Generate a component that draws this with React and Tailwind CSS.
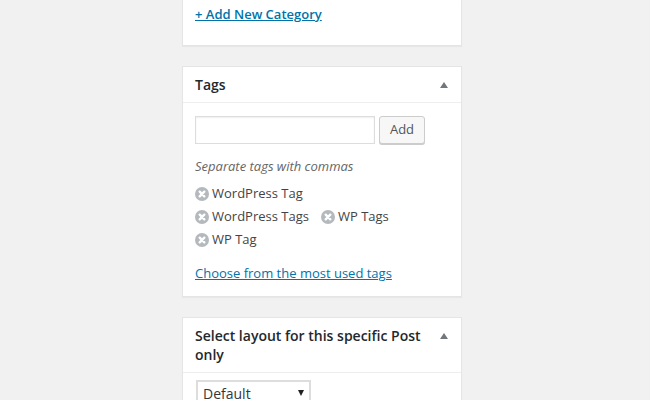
function Arrow() {
  return (
    <svg width="8" height="6" viewBox="0 0 8 6" className="block">
      <path d="M4 0 L8 6 L0 6 Z" fill="#72777c" />
    </svg>
  );
}

function X() {
  return (
    <svg width="14" height="14" viewBox="0 0 14 14" className="block shrink-0">
      <circle cx="7" cy="7" r="7" fill="#b4b9be" />
      <path d="M4.7 4.7 L9.3 9.3 M9.3 4.7 L4.7 9.3" stroke="#fff" strokeWidth="2.4" strokeLinecap="round" />
    </svg>
  );
}

function Tag({ children }) {
  return (
    <span className="flex items-center gap-[3px] mr-[12px] h-[23px] text-[13px] text-[#444]">
      <X />
      <span>{children}</span>
    </span>
  );
}

export default function App() {
  return (
    <div className="h-[400px] w-[650px] overflow-hidden bg-[#f1f1f1] pl-[182px] font-['Open_Sans',sans-serif]">
      <div className="w-[280px] flex flex-col gap-[20px]">
        <section className="h-[46px] bg-white border border-t-0 border-[#e5e5e5] shadow-[0_1px_1px_rgba(0,0,0,0.04)] px-3 pt-[5px]">
          <a className="block text-[13px] leading-[19px] font-semibold text-[#0073aa] underline">+ Add New Category</a>
        </section>

        <section className="h-[231px] bg-white border border-[#e5e5e5] shadow-[0_1px_1px_rgba(0,0,0,0.04)]">
          <header className="h-[36px] flex items-center justify-between pl-3 pr-[13px] border-b border-[#eee]">
            <h2 className="text-[14px] font-semibold text-[#23282d]">Tags</h2>
            <Arrow />
          </header>
          <div className="px-3 pt-[13px]">
            <div className="flex gap-[4px]">
              <input className="w-[180px] h-[28px] bg-white border border-[#ddd] shadow-[inset_0_1px_2px_rgba(0,0,0,0.07)]" />
              <button className="w-[46px] h-[28px] bg-[#f7f7f7] border border-[#ccc] rounded-[3px] shadow-[0_1px_0_#ccc] text-[13px] text-[#555]">Add</button>
            </div>
            <p className="mt-[13px] text-[13px] leading-[19px] italic text-[#666]">Separate tags with commas</p>
            <div className="mt-[6px] flex flex-wrap">
              <div className="w-full flex"><Tag>WordPress Tag</Tag></div>
              <Tag>WordPress Tags</Tag>
              <Tag>WP Tags</Tag>
              <div className="w-full flex"><Tag>WP Tag</Tag></div>
            </div>
            <a className="block mt-[13px] text-[13px] leading-[19px] text-[#0073aa] underline">Choose from the most used tags</a>
          </div>
        </section>

        <section className="bg-white border border-[#e5e5e5] shadow-[0_1px_1px_rgba(0,0,0,0.04)]">
          <header className="flex justify-between pl-3 pr-[13px] pt-[8px] pb-[8px] border-b border-[#eee]">
            <h2 className="w-[240px] text-[14px] leading-[19px] font-semibold text-[#23282d]">Select layout for this specific Post only</h2>
            <div className="pt-[7px]"><Arrow /></div>
          </header>
          <div className="px-[13px] pt-[7px] pb-3">
            <div className="w-[115px] h-[26px] flex items-center justify-between pb-[2px] pl-[5px] pr-[5px] border-2 border-b-0 border-[#ddd] bg-white text-[14px] text-[#32373c]">
              <span>Default</span>
              <svg width="6" height="6" viewBox="0 0 6 6" className="block"><path d="M0 0 H6 L3 6 Z" fill="#222" /></svg>
            </div>
          </div>
        </section>
      </div>
    </div>
  );
}
